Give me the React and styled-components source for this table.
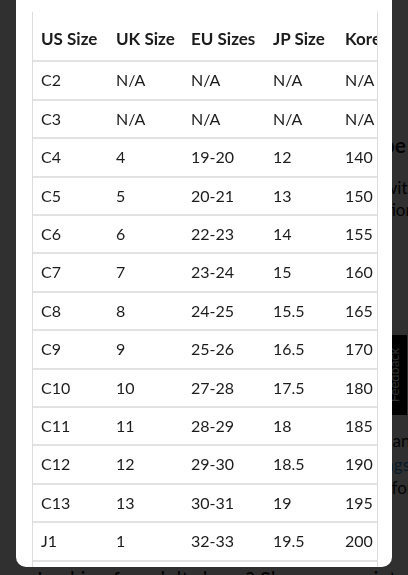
import React from "react";
import styled, { createGlobalStyle } from "styled-components";

const GlobalStyle = createGlobalStyle`
  * {
    box-sizing: border-box;
  }
  html,
  body {
    margin: 0;
    padding: 0;
    height: 100%;
    overflow: hidden;
    background: #fff;
  }
  body {
    font-family: Lato, "Open Sans", sans-serif;
    color: #111;
  }
`;

// page behind the modal (only its right edge and bottom peek out)
const Page = styled.div`
  width: 430px;
  padding-top: 133px;
`;

const PageHeading = styled.h2`
  margin: 0;
  font-size: 21px;
  font-weight: 700;
  line-height: 24px;
  white-space: nowrap;
  text-align: right;
  padding-right: ${(p) => 430 - p.$end}px;
`;

const PageLine = styled.div`
  font-size: 17px;
  line-height: ${(p) => p.$lh || 22}px;
  white-space: nowrap;
  text-align: right;
  padding-right: ${(p) => 430 - p.$end}px;
  color: ${(p) => (p.$link ? "#2d8ad6" : "#111")};
`;

const Para = styled.div`
  margin-top: ${(p) => p.$top}px;
`;

const Lead = styled.p`
  margin: 66px 0 0;
  padding-left: 37px;
  font-size: 20.5px;
  line-height: 26px;
  white-space: nowrap;
`;

const FeedbackTab = styled.div`
  position: fixed;
  top: 335px;
  right: 1px;
  width: 26px;
  height: 80px;
  background: #000;
  color: #fff;
  display: flex;
  align-items: center;
  justify-content: center;

  span {
    transform: rotate(-90deg);
    font-size: 13px;
    white-space: nowrap;
  }
`;

const Overlay = styled.div`
  position: fixed;
  inset: 0;
  background: rgba(0, 0, 0, 0.81);
  display: flex;
  justify-content: center;
  align-items: flex-start;
`;

const Modal = styled.div`
  width: 376px;
  height: 567px;
  background: #fff;
  border-radius: 0 0 10px 10px;
  overflow: hidden;
  padding: 12px 14px 0 16px;
`;

const TableWrap = styled.div`
  border-left: 1px solid #dcdcdc;
  border-right: 1px solid #dcdcdc;
  overflow: hidden;
`;

const Table = styled.table`
  border-collapse: separate;
  border-spacing: 0;
  white-space: nowrap;
  font-family: Lato, "Open Sans", sans-serif;
  font-size: 16px;
  color: #1c1c1c;
`;

const Th = styled.th`
  text-align: left;
  font-size: 17px;
  font-weight: 700;
  padding: 16px 8px 10px;
  line-height: 22.4px;
  border-bottom: 2px solid #e2e2e2;
  min-width: ${(p) => (p.$w ? `${p.$w}px` : "auto")};
`;

const Td = styled.td`
  padding: 7px 8px;
  line-height: 22.4px;
  border-bottom: 2px solid #e2e2e2;
`;

const columns = [
  { label: "US Size", w: 75 },
  { label: "UK Size", w: 75 },
  { label: "EU Sizes", w: 82 },
  { label: "JP Size", w: 72 },
  { label: "Korean Size", w: 0 },
];

const rows = [
  ["C2", "N/A", "N/A", "N/A", "N/A"],
  ["C3", "N/A", "N/A", "N/A", "N/A"],
  ["C4", "4", "19-20", "12", "140"],
  ["C5", "5", "20-21", "13", "150"],
  ["C6", "6", "22-23", "14", "155"],
  ["C7", "7", "23-24", "15", "160"],
  ["C8", "8", "24-25", "15.5", "165"],
  ["C9", "9", "25-26", "16.5", "170"],
  ["C10", "10", "27-28", "17.5", "180"],
  ["C11", "11", "28-29", "18", "185"],
  ["C12", "12", "29-30", "18.5", "190"],
  ["C13", "13", "30-31", "19", "195"],
  ["J1", "1", "32-33", "19.5", "200"],
  ["J2", "2", "33-34", "20.5", "205"],
];

export default function App() {
  return (
    <>
      <GlobalStyle />
      <Page>
        <PageHeading $end={406}>Kids' Shoe Sizes by Type</PageHeading>
        <Para $top={20}>
          <PageLine $end={417}>Measure your child's feet and compare with</PageLine>
          <PageLine $end={415}>the chart below for the best size selection</PageLine>
        </Para>
        <Para $top={208}>
          <PageLine $lh={23.5} $end={420}>Find kids' shoes in every style and</PageLine>
          <PageLine $lh={23.5} $end={410} $link>
            browse all of our kids' shoe listings
          </PageLine>
          <PageLine $lh={23.5} $end={413}>and shop more options for</PageLine>
        </Para>
        <Lead>Looking for adult shoes? Shop our variety</Lead>
      </Page>
      <FeedbackTab>
        <span>Feedback</span>
      </FeedbackTab>

      <Overlay>
        <Modal>
          <TableWrap>
            <Table>
              <thead>
                <tr>
                  {columns.map((c) => (
                    <Th key={c.label} $w={c.w}>
                      {c.label}
                    </Th>
                  ))}
                </tr>
              </thead>
              <tbody>
                {rows.map((r) => (
                  <tr key={r[0]}>
                    {r.map((cell, i) => (
                      <Td key={i}>{cell}</Td>
                    ))}
                  </tr>
                ))}
              </tbody>
            </Table>
          </TableWrap>
        </Modal>
      </Overlay>
    </>
  );
}
